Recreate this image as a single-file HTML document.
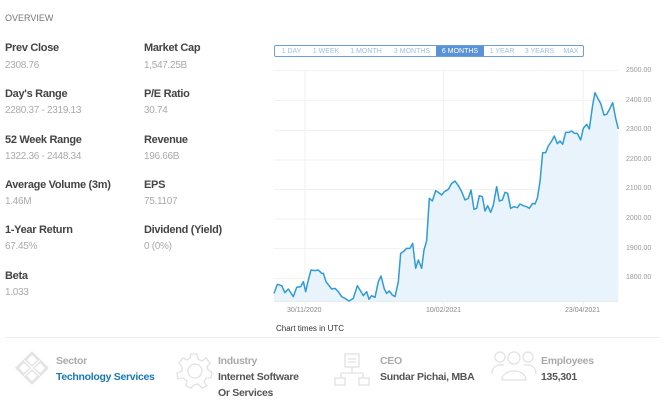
<!DOCTYPE html>
<html><head><meta charset="utf-8"><style>
*{margin:0;padding:0;box-sizing:border-box}
body{width:669px;height:405px;background:#fff;font-family:"Liberation Sans",sans-serif;position:relative;overflow:hidden}
.a{position:absolute;white-space:nowrap}
.ov{font-size:9px;color:#777;left:5px;top:13px}
.l{font-size:11px;font-weight:bold;color:#444;letter-spacing:-0.3px}
.v{font-size:10px;color:#aaa;letter-spacing:-0.3px}
.tabs{left:274px;top:45px;width:310px;height:12px;border:1px solid #6b9fdc;border-radius:2px;display:flex;font-size:7px;color:#9fbfe6}
.tabs span{display:flex;align-items:center;justify-content:center}
.tabs .on{background:#5a92d8;color:#fff}
.yl{font-size:7px;color:#999;left:626px}
.xl{font-size:7px;color:#888;top:307px}
.bl{font-size:10.5px;font-weight:bold;color:#aaa;letter-spacing:-0.3px}
.bv{font-size:10.5px;font-weight:bold;color:#555;line-height:16px;letter-spacing:-0.3px}
</style></head><body>
<div class="a ov">OVERVIEW</div>
<div class="a l" style="left:5px;top:42px">Prev Close</div><div class="a v" style="left:5px;top:60px">2308.76</div>
<div class="a l" style="left:144px;top:42px">Market Cap</div><div class="a v" style="left:144px;top:60px">1,547.25B</div>
<div class="a l" style="left:5px;top:88px">Day's Range</div><div class="a v" style="left:5px;top:105px">2280.37 - 2319.13</div>
<div class="a l" style="left:144px;top:88px">P/E Ratio</div><div class="a v" style="left:144px;top:105px">30.74</div>
<div class="a l" style="left:5px;top:134px">52 Week Range</div><div class="a v" style="left:5px;top:151px">1322.36 - 2448.34</div>
<div class="a l" style="left:144px;top:134px">Revenue</div><div class="a v" style="left:144px;top:151px">196.66B</div>
<div class="a l" style="left:5px;top:179px">Average Volume (3m)</div><div class="a v" style="left:5px;top:196px">1.46M</div>
<div class="a l" style="left:144px;top:179px">EPS</div><div class="a v" style="left:144px;top:196px">75.1107</div>
<div class="a l" style="left:5px;top:224px">1-Year Return</div><div class="a v" style="left:5px;top:241px">67.45%</div>
<div class="a l" style="left:144px;top:224px">Dividend (Yield)</div><div class="a v" style="left:144px;top:241px">0 (0%)</div>
<div class="a l" style="left:5px;top:270px">Beta</div><div class="a v" style="left:5px;top:287px">1.033</div>

<div class="a tabs"><span style="width:33px">1 DAY</span><span style="width:36px">1 WEEK</span><span style="width:44px">1 MONTH</span><span style="width:48px">3 MONTHS</span><span class="on" style="width:48px">6 MONTHS</span><span style="width:36px">1 YEAR</span><span style="width:39px">3 YEARS</span><span style="flex:1">MAX</span></div>

<svg class="a" style="left:270px;top:35px" width="399" height="300" viewBox="0 0 1197 900">
<g stroke="#f1f1f1" stroke-width="3">
<line x1="12" y1="107" x2="1045" y2="107"/><line x1="12" y1="197" x2="1045" y2="197"/><line x1="12" y1="286" x2="1045" y2="286"/><line x1="12" y1="375" x2="1045" y2="375"/><line x1="12" y1="463" x2="1045" y2="463"/><line x1="12" y1="552" x2="1045" y2="552"/><line x1="12" y1="641" x2="1045" y2="641"/><line x1="12" y1="730" x2="1045" y2="730"/>
<line x1="105" y1="107" x2="105" y2="812"/><line x1="520" y1="107" x2="520" y2="812"/><line x1="940" y1="107" x2="940" y2="812"/>
</g>
<line x1="12" y1="800" x2="1045" y2="800" stroke="#e4e4e4" stroke-width="3"/>
<path fill="#e8f3fb" stroke="none" d="M12,775 L22,748 35,752 45,773 55,762 70,785 80,757 92,755 100,740 107,770 115,735 123,705 135,707 145,705 155,715 160,715 168,740 185,762 195,760 205,770 215,785 225,790 237,798 250,790 262,752 270,765 280,782 290,770 297,793 305,782 315,787 325,740 333,723 343,762 350,775 358,768 367,780 375,785 385,740 392,655 400,650 410,640 420,640 428,625 437,700 445,675 455,700 462,645 470,617 478,490 487,498 497,467 505,472 515,480 523,470 535,463 545,445 555,438 565,452 575,470 585,495 595,490 603,465 612,523 620,520 628,482 637,485 645,528 653,512 662,532 670,510 680,455 688,498 697,495 705,472 713,475 722,520 732,515 742,518 750,507 760,512 770,515 778,520 788,505 795,507 802,490 810,440 818,353 827,353 835,333 845,318 853,303 862,326 870,318 878,328 887,292 897,292 905,288 913,295 922,295 932,315 940,280 950,268 958,282 968,210 975,173 985,193 992,205 1002,240 1010,238 1020,220 1028,203 1037,250 1045,282 L1045,800 L12,800 Z"/>
<path fill="none" stroke="#2f9bd8" stroke-width="4.5" stroke-linejoin="round" d="M12,775 L22,748 35,752 45,773 55,762 70,785 80,757 92,755 100,740 107,770 115,735 123,705 135,707 145,705 155,715 160,715 168,740 185,762 195,760 205,770 215,785 225,790 237,798 250,790 262,752 270,765 280,782 290,770 297,793 305,782 315,787 325,740 333,723 343,762 350,775 358,768 367,780 375,785 385,740 392,655 400,650 410,640 420,640 428,625 437,700 445,675 455,700 462,645 470,617 478,490 487,498 497,467 505,472 515,480 523,470 535,463 545,445 555,438 565,452 575,470 585,495 595,490 603,465 612,523 620,520 628,482 637,485 645,528 653,512 662,532 670,510 680,455 688,498 697,495 705,472 713,475 722,520 732,515 742,518 750,507 760,512 770,515 778,520 788,505 795,507 802,490 810,440 818,353 827,353 835,333 845,318 853,303 862,326 870,318 878,328 887,292 897,292 905,288 913,295 922,295 932,315 940,280 950,268 958,282 968,210 975,173 985,193 992,205 1002,240 1010,238 1020,220 1028,203 1037,250 1045,282"/>
</svg>
<div class="a yl" style="top:67px">2500.00</div><div class="a yl" style="top:97px">2400.00</div><div class="a yl" style="top:126px">2300.00</div><div class="a yl" style="top:156px">2200.00</div><div class="a yl" style="top:185px">2100.00</div><div class="a yl" style="top:215px">2000.00</div><div class="a yl" style="top:245px">1900.00</div><div class="a yl" style="top:274px">1800.00</div>
<div class="a xl" style="left:287px">30/11/2020</div><div class="a xl" style="left:426px">10/02/2021</div><div class="a xl" style="left:565px">23/04/2021</div>
<div class="a" style="left:276px;top:324px;font-size:8px;color:#333">Chart times in UTC</div>

<div class="a" style="left:5px;top:337px;width:655px;height:1px;background:#eef0f5"></div>

<svg class="a" style="left:12px;top:350px" width="40" height="40" viewBox="0 0 40 40" fill="none" stroke="#e2e2e2" stroke-width="1.3">
<path d="M20,4 L26,10 20,16 14,10Z M12,12 L18,18 12,24 6,18Z M28,12 L34,18 28,24 22,18Z M20,20 L26,26 20,32 14,26Z M4,18 L20,2 36,18 20,34Z"/>
</svg>
<div class="a bl" style="left:56px;top:355px">Sector</div>
<div class="a bv" style="left:56px;top:369px;color:#1a78b8">Technology Services</div>

<svg class="a" style="left:174px;top:350px" width="40" height="40" viewBox="0 0 40 40" fill="none" stroke="#e2e2e2" stroke-width="1.3">
<path d="M17,4 L23,4 24,9 28,11 32,8 36,13 33,17 34,20 38,22 37,28 32,28 30,32 33,36 28,38 24,34 20,35 17,38 12,36 13,31 9,28 4,29 3,23 8,21 8,17 5,13 9,8 13,10 16,8Z"/>
<circle cx="21" cy="21" r="7"/>
</svg>
<div class="a bl" style="left:218px;top:355px">Industry</div>
<div class="a bv" style="left:218px;top:369px">Internet Software<br>Or Services</div>

<svg class="a" style="left:334px;top:350px" width="40" height="40" viewBox="0 0 40 40" fill="none" stroke="#e2e2e2" stroke-width="1.3">
<rect x="11" y="4" width="14" height="13"/><path d="M14,9h8M14,12h8M18,17v6M7,23h22M7,23v5M29,23v5"/><rect x="1" y="28" width="10" height="7"/><rect x="25" y="28" width="10" height="7"/>
</svg>
<div class="a bl" style="left:380px;top:355px">CEO</div>
<div class="a bv" style="left:380px;top:369px">Sundar Pichai, MBA</div>

<svg class="a" style="left:490px;top:350px" width="48" height="36" viewBox="0 0 48 36" fill="none" stroke="#e2e2e2" stroke-width="1.3">
<circle cx="10" cy="7" r="5"/><circle cx="24" cy="8" r="6"/><circle cx="38" cy="7" r="5"/>
<path d="M2,24 C2,16 8,14 14,15 M46,24 C46,16 40,14 34,15 M12,30 C12,18 36,18 36,30Z"/>
</svg>
<div class="a bl" style="left:541px;top:355px">Employees</div>
<div class="a bv" style="left:541px;top:369px">135,301</div>
</body></html>
